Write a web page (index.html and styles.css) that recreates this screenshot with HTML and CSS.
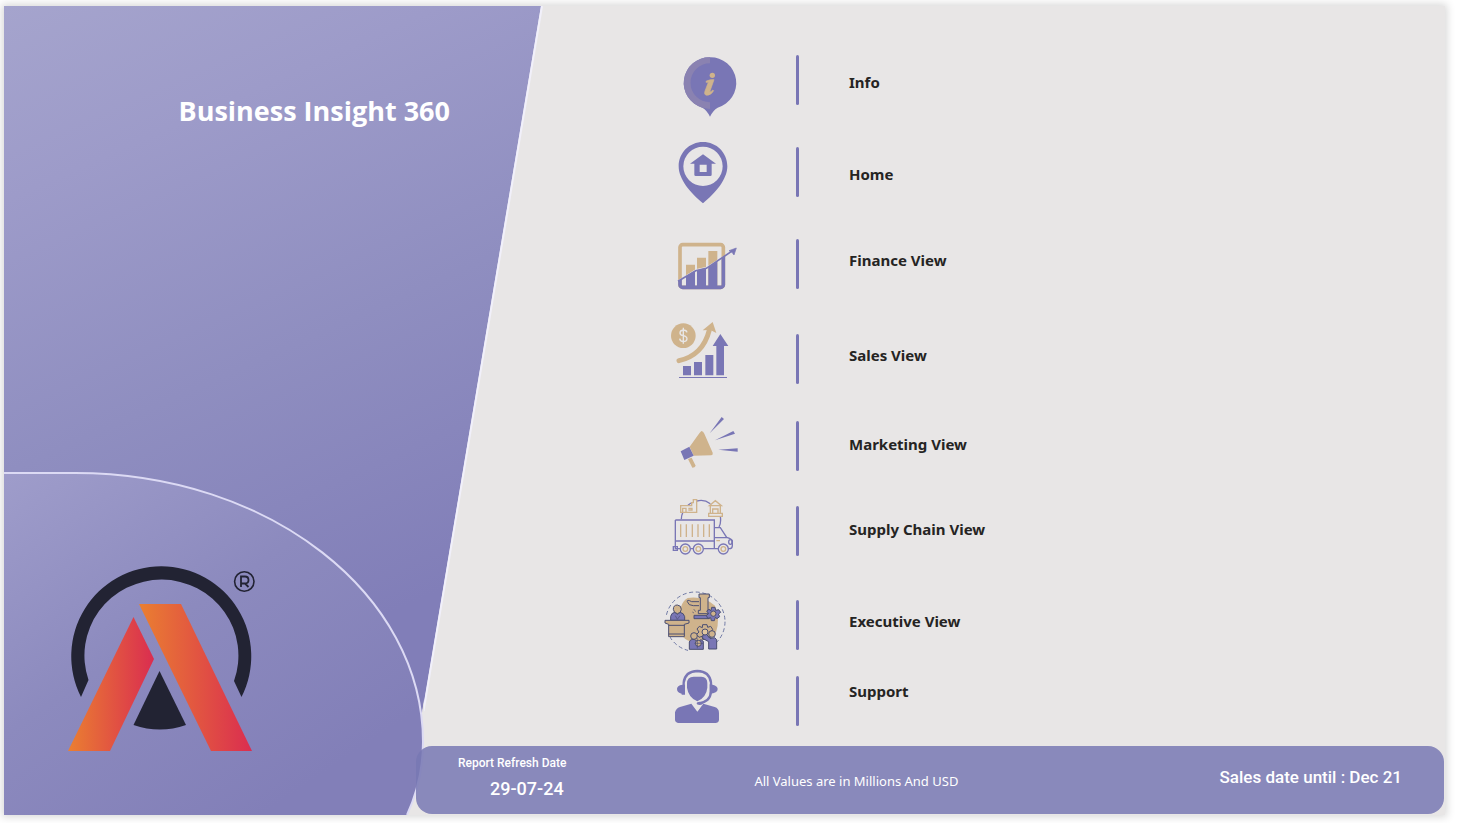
FILE: index.html
```
<!DOCTYPE html>
<html lang="en">
<head>
<meta charset="utf-8">
<title>Business Insight 360</title>
<link rel="stylesheet" href="styles.css">
</head>
<body>
<div class="report">
  <svg class="backdrop" viewBox="4 6 1441 809" preserveAspectRatio="none" aria-hidden="true">
    <defs>
      <linearGradient id="panel" gradientUnits="userSpaceOnUse" x1="40" y1="-10" x2="330" y2="640">
        <stop offset="0" stop-color="#a5a4cd"/><stop offset=".25" stop-color="#9d9bc9"/>
        <stop offset=".6" stop-color="#8f8ec0"/><stop offset="1" stop-color="#817eb8"/>
      </linearGradient>
      <linearGradient id="dome" gradientUnits="userSpaceOnUse" x1="4" y1="480" x2="240" y2="830">
        <stop offset="0" stop-color="#9e9cca"/><stop offset=".5" stop-color="#8c8abe"/><stop offset="1" stop-color="#827fb8"/>
      </linearGradient>
    </defs>
    <path d="M4 6H542L423 715V815H4Z" fill="#eeedf8"/>
    <path d="M4 6H541L422 715L400 815H4Z" fill="url(#panel)"/>
    <path d="M542 6L423.500 711" stroke="#f1f0fa" stroke-width="2" fill="none"/>
    <path d="M424 700V815H406Z" fill="#e8e6e6"/>
    <path d="M4 473H75C270 473 423 595 423 742Q423 780 407 815H4Z" fill="url(#dome)"/>
    <path d="M4 473H75C270 473 423 595 423 742Q423 780 407 815" fill="none" stroke="#dcdaf4" stroke-width="2"/>
  </svg>

  <h1 class="title">Business Insight 360</h1>

  <svg class="logo" viewBox="66 564 192 190" role="img" aria-label="Company logo">
    <defs>
      <linearGradient id="flame"><stop offset="0" stop-color="#ea7f31"/><stop offset="1" stop-color="#da2d50"/></linearGradient>
    </defs>
    <path d="M81 697A90 90 0 1 1 241.500 697L234 681A77 76 0 1 0 88.500 680Z" fill="#222333"/>
    <path d="M133.500 617L154 659L110 751H68Z" fill="url(#flame)"/>
    <path d="M139 604H181L252 751H211Z" fill="url(#flame)"/>
    <path d="M159.500 671L186 725Q160 734 133.500 725Z" fill="#222333"/>
    <circle cx="244.300" cy="581.500" r="9.700" fill="none" stroke="#222333" stroke-width="1.600"/>
    <path d="M241 587V576.500H245Q248.500 576.500 248.500 580Q248.500 583.500 245 583.500H241M245 583.500L248.500 587" fill="none" stroke="#222333" stroke-width="1.800"/>
  </svg>

  <nav class="views" aria-label="Report views">
    <a class="view" href="#info">
      <svg class="icon" viewBox="0 -9 240 228" aria-hidden="true">
        <path d="M150 37A77 77 0 0 1 173 188Q159 196 150 215Q141 196 127 188A77 77 0 0 1 150 37Z" fill="#7976b5"/>
        <path d="M150 37A77 77 0 0 0 127 188L150 192V172A58 58 0 0 1 150 55Z" fill="#8a82b1"/>
        <circle cx="157" cy="91" r="8" fill="#cfb38c"/>
        <path d="M139 108Q152 103 162 104L149 141Q154 141 158 135L161 137Q153 151 140 151Q131 149 135 138L145 112L138 112Z" fill="#cfb38c" stroke="#cfb38c" stroke-width="2"/>
      </svg>
      <span class="rule"></span><span class="label lowered">Info</span>
    </a>
    <a class="view" href="#home">
      <svg class="icon" viewBox="0 12 240 228" aria-hidden="true">
        <path fill-rule="evenodd" d="M129 36C88 36 56 68 56 109C56 148 92 190 129 220C166 190 202 148 202 109C202 68 170 36 129 36ZM129 50A59 59 0 1 1 129 168A59 59 0 1 1 129 50Z" fill="#7976b5"/>
        <path fill-rule="evenodd" d="M129 73L168 101H155V134Q155 138 151 138H107Q103 138 103 134V101H90ZM119 104V126H140V104Z" fill="#7976b5"/>
      </svg>
      <span class="rule"></span><span class="label lowered">Home</span>
    </a>
    <a class="view" href="#finance">
      <svg class="icon" viewBox="0 -12 240 228" aria-hidden="true">
        <defs><clipPath id="under"><path d="M50 156L107 123L139 116L230 56V190H50Z"/></clipPath></defs>
        <g fill="#cfb38c"><path d="M78 104H105V167H78ZM111 83H138V167H111ZM145 63H172V167H145Z"/></g>
        <rect x="60" y="44" width="130" height="128" rx="8" fill="none" stroke="#cfb38c" stroke-width="11"/>
        <g clip-path="url(#under)">
          <rect x="60" y="44" width="130" height="128" rx="8" fill="none" stroke="#7976b5" stroke-width="11"/>
          <path d="M78 90H105V173H78ZM111 83H138V173H111ZM145 63H172V173H145Z" fill="#7976b5"/>
        </g>
        <path d="M54 152L107 119L139 112L190 80" fill="none" stroke="#e8e6e6" stroke-width="3"/>
        <path d="M54 154L107 122L139 115L218 62" fill="none" stroke="#7976b5" stroke-width="5"/>
        <path d="M229 54L222 75L216 67L207 62Z" fill="#7976b5" stroke="#7976b5" stroke-width="2"/>
      </svg>
      <span class="rule"></span><span class="label raised">Finance View</span>
    </a>
    <a class="view" href="#sales">
      <svg class="icon" viewBox="0 33 240 228" aria-hidden="true">
        <circle cx="70" cy="77" r="37" fill="#cfb38c"/>
        <path d="M81 67Q79 60 70 60Q60 61 60 69Q60 76 70 77Q81 79 81 87Q80 95 70 95Q60 94 59 86M70 53V101" fill="none" stroke="#e8e6e6" stroke-width="4"/>
        <path d="M57 152Q129 136 148 60" fill="none" stroke="#cfb38c" stroke-width="15" stroke-linecap="round"/>
        <path d="M158 36L169 69L151 60L128 61Z" fill="#cfb38c"/>
        <path d="M69 168H93V196H69ZM102 156H126V196H102ZM136 135H160V196H136ZM169 196V108H158L181 72L205 108H192V196ZM57 201H201V204H57Z" fill="#7976b5"/>
      </svg>
      <span class="rule"></span><span class="label raised">Sales View</span>
    </a>
    <a class="view" href="#marketing">
      <svg class="icon" viewBox="0 9 240 228" aria-hidden="true">
        <path d="M124 78Q130 79 133 86L158 143Q160 150 154 151L101 152L89 125L118 85ZM84 162L95 158L107 182Q105 188 97 188Z" fill="#cfb38c"/>
        <path d="M62 139L88 125L101 152L73 165ZM149 85L185 36L192 42ZM165 106L220 78L225 86ZM175 134L233 130V140Z" fill="#7976b5"/>
      </svg>
      <span class="rule"></span><span class="label">Marketing View</span>
    </a>
    <a class="view" href="#supply-chain">
      <svg class="icon" viewBox="0 9 240 228" aria-hidden="true">
        <g fill="none" stroke="#7976b5" stroke-width="4">
          <path d="M64 88Q64 76 69 66M84 46Q93 38 97 38M111 33Q132 27 151 41M181 79Q184 98 177 111"/>
          <path d="M46 90H163V176H208Q217 176 217 167V152Q215 146 200 142L181 113H163M46 90V176H60M90 176H99M130 176H175M46 153H163M163 143H200M52 170H40V181H52Z"/>
          <ellipse cx="211" cy="156" rx="5" ry="7"/>
          <g fill="#e8e6e6"><circle cx="76" cy="177" r="15"/><circle cx="115" cy="177" r="15"/><circle cx="190" cy="177" r="15"/></g>
        </g>
        <g fill="none" stroke="#cfb38c" stroke-width="4">
          <path d="M62 103V141M79 103V141M97 103V141M114 103V141M131 103V141M148 103V141M169 152H180"/>
          <circle cx="76" cy="177" r="7"/><circle cx="115" cy="177" r="7"/><circle cx="190" cy="177" r="7"/>
          <path d="M62 47H95V38H100V29H110V67H62ZM68 67V55H78V67M85 55H96V60H85M146 70H187V79H146ZM151 70V47H181V70M148 47L166 32L184 47ZM158 70V57H174V70"/>
        </g>
      </svg>
      <span class="rule"></span><span class="label">Supply Chain View</span>
    </a>
    <a class="view" href="#executive">
      <svg class="icon" viewBox="15 6 240 228" aria-hidden="true">
        <circle cx="121" cy="110" r="89" fill="none" stroke="#6f79a5" stroke-width="3" stroke-dasharray="12 8"/>
        <path d="M15 90H45V165H15ZM99 186H190V206H99Z" fill="#e8e6e6"/>
        <path d="M98 39Q145 32 180 62Q196 105 183 142L160 160L127 170Q96 172 85 156L76 110Q70 55 98 39Z" fill="#cfb38c"/>
        <g stroke="#4b4f72" stroke-width="3" stroke-linejoin="round">
          <path d="M132 27H163V38H159V76H165V86H130V76H136V38H132ZM132 50H110Q95 42 97 50Q100 62 115 62H132" fill="#cfb38c"/>
          <path d="M117 91H163V101H117Z" fill="#7976b5"/>
          <path d="M170 67H180L182 76L191 74L197 82L190 87L194 95L186 101L181 97L178 107H169L167 98L158 100L154 91L161 86L155 78L162 73L168 77Z" fill="#7976b5"/>
          <circle cx="175" cy="86" r="8" fill="#cfb38c"/>
          <path d="M47 106V94Q49 83 60 82L67 88L75 82Q87 84 89 95V106Z" fill="#7976b5"/>
          <path d="M55 73Q55 60 67 60Q79 61 79 73Q78 85 67 86Q56 84 55 73ZM30 106H102V114L88 118V155H41V118L30 114ZM41 121H88M41 147H88" fill="#cfb38c"/>
          <path d="M143 119H156L158 127L167 124L173 133L168 141L174 150L166 159L158 154L153 163H143L141 154L132 157L125 148L132 141L126 132L133 124L142 128Z" fill="#cfb38c"/>
          <path d="M103 193V171Q106 161 119 164L128 170L138 164L145 169V193ZM143 151L154 147L165 161L179 158L185 164V192H161V170L143 160Z" fill="#7976b5"/>
          <circle cx="117" cy="153" r="10" fill="#cfb38c"/><circle cx="171" cy="147" r="10" fill="#cfb38c"/><circle cx="150" cy="141" r="9" fill="#e1c7a0"/><circle cx="130" cy="175" r="9" fill="#cfb38c"/>
        </g>
        <path d="M112 81L117 84M116 72L122 80M127 160V190M119 175H144M61 92L67 103L75 92" fill="none" stroke="#4b4f72" stroke-width="2"/>
      </svg>
      <span class="rule"></span><span class="label raised">Executive View</span>
    </a>
    <a class="view" href="#support">
      <svg class="icon" viewBox="0 9 240 228" aria-hidden="true">
        <path d="M81 70Q81 51 101 50H124Q142 51 142 69V83Q139 112 112 124Q85 112 81 83ZM45 180V157Q48 145 60 141L94 131L112 155L130 131L164 141Q177 145 177 159V180Q176 189 166 189H56Q46 188 45 180ZM67 74Q51 76 51 87Q51 98 65 101V104H75V74ZM149 73V101Q173 100 173 87Q173 78 158 74Z" fill="#7976b5"/>
        <path d="M71 79V68Q75 34 112 33Q149 34 153 68V95Q151 125 117 130" fill="none" stroke="#7976b5" stroke-width="7"/>
        <path d="M101 126H112V134L124 136L113 153L101 134Z" fill="#e8e6e6"/>
        <ellipse cx="119" cy="130" rx="9" ry="5" fill="#7976b5"/>
      </svg>
      <span class="rule"></span><span class="label topped">Support</span>
    </a>
  </nav>

  <footer class="status">
    <dl class="refresh">
      <dt>Report Refresh Date</dt>
      <dd>29-07-24</dd>
    </dl>
    <p class="units">All Values are in Millions And USD</p>
    <p class="until">Sales date until : Dec 21</p>
  </footer>
</div>
</body>
</html>
```
FILE: styles.css
```
* { box-sizing: border-box; }

body {
  margin: 0;
  padding: 6px 17px 8px 4px;
  background: #fff;
  color: #252423;
  font-family: "Noto Sans", sans-serif;
}

h1, p, dl, dd { margin: 0; }

.report {
  position: relative;
  display: grid;
  grid-template-columns: 412fr 126fr 903fr;
  grid-template-rows: auto 1fr auto;
  min-height: calc(100vh - 14px);
  background: #e8e6e6;
  box-shadow: 0 0 8px 2px #d8d8d8;
}

.backdrop {
  position: absolute;
  inset: 0;
  width: 100%;
  height: 100%;
}

.title, .logo, .views, .status { position: relative; }

.title {
  grid-area: 1 / 1 / 2 / 3;
  padding: 88px 92px 0 0;
  color: #fff;
  font: 700 27px/34px "Open Sans", sans-serif;
  text-align: right;
}

.logo {
  grid-area: 2 / 1 / 4 / 2;
  align-self: end;
  width: 192px;
  margin: 0 0 61px 62px;
}

.views {
  grid-area: 1 / 3 / 3 / 4;
  display: grid;
  grid-template-rows: 92px 92px 95px 87px 85px 94px 76px 76px;
  align-items: start;
  padding: 36px 0 0 118px;
}

.view {
  display: flex;
  align-items: center;
  color: inherit;
  text-decoration: none;
}

.icon {
  width: 80px;
  height: 76px;
}

.rule {
  width: 3px;
  height: 50px;
  margin: 0 50px 0 56px;
  border-radius: 2px;
  background: #7976b5;
}

.label {
  padding-bottom: 4px;
  font-size: 15px;
  font-weight: 700;
  line-height: 20px;
}

.lowered { padding: 4px 0 0; }
.raised { padding-bottom: 8px; }
.topped { padding-bottom: 20px; }

.status {
  grid-area: 3 / 2 / 4 / 4;
  display: grid;
  grid-template-columns: auto 1fr auto;
  height: 68px;
  margin: 0 1px 1px 0;
  padding: 0 42px;
  border-radius: 16px;
  background: rgba(120, 120, 179, 0.85);
  color: #fff;
}

.refresh {
  padding-top: 9px;
  font: 500 12px/16px Roboto, sans-serif;
}

.refresh dd {
  padding: 6px 0 0 32px;
  font-size: 18px;
  line-height: 24px;
}

.units {
  padding: 24px 0 0 188px;
  font: 400 13px/22px "Noto Sans", sans-serif;
}

.until {
  padding-top: 20px;
  font: 500 17px/22px Roboto, sans-serif;
}
```
